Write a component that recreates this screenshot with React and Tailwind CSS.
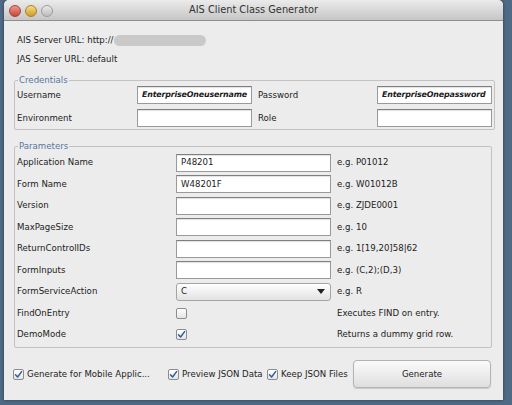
const font = "font-['Lucida_Grande','DejaVu_Sans',Verdana,sans-serif]";

const Field = ({ value, italic, className = "" }) => (
  <div
    className={`h-[18px] bg-white border border-[#9a9a9a] border-t-[#7f7f7f] shadow-[inset_0_1px_1px_rgba(0,0,0,0.12)] flex items-center px-[4px] whitespace-nowrap overflow-hidden text-[#1a1a1a] ${italic ? "italic font-bold text-[7.9px] tracking-[-0.15px]" : "text-[8.6px]"} ${className}`}
  >
    {value}
  </div>
);

const Check = ({ checked }) => (
  <div className="w-[11px] h-[11px] shrink-0 rounded-[2px] border border-[#8d8d8d] bg-gradient-to-b from-white to-[#e4e4e4] flex items-center justify-center">
    {checked && (
      <svg width="9" height="9" viewBox="0 0 9 9">
        <path d="M1.5 4.8 L3.6 7 L7.6 1.6" fill="none" stroke="#2f5f9f" strokeWidth="1.5" strokeLinecap="round" strokeLinejoin="round" />
      </svg>
    )}
  </div>
);

const params = [
  { label: "Application Name", value: "P48201", hint: "e.g. P01012" },
  { label: "Form Name", value: "W48201F", hint: "e.g. W01012B" },
  { label: "Version", value: "", hint: "e.g. ZJDE0001" },
  { label: "MaxPageSize", value: "", hint: "e.g. 10" },
  { label: "ReturnControlIDs", value: "", hint: "e.g. 1[19,20]58|62" },
  { label: "FormInputs", value: "", hint: "e.g. (C,2);(D,3)" },
  { label: "FormServiceAction", combo: "C", hint: "e.g. R" },
  { label: "FindOnEntry", check: false, hint: "Executes FIND on entry." },
  { label: "DemoMode", check: true, hint: "Returns a dummy grid row." },
];

export default function App() {
  return (
    <div className={`w-[512px] h-[405px] bg-[#4f6a85] pl-[4px] pr-[9px] pb-[5px] ${font} text-[8.6px] text-[#222] whitespace-nowrap`}>
      <div className="w-full h-full bg-[#ececec] rounded-t-[5px] flex flex-col overflow-hidden shadow-[0_0_3px_rgba(0,0,0,0.5)]">
        {/* title bar */}
        <div className="h-[21px] shrink-0 relative flex items-center justify-center bg-gradient-to-b from-[#ebebeb] to-[#c6c6c6] border-b border-[#8e8e8e]">
          <div className="absolute left-[5px] top-[5px] flex gap-[4px]">
            <div className="w-[12px] h-[12px] rounded-full bg-gradient-to-b from-[#f1958b] to-[#c6453c] border border-[#a0453e]" />
            <div className="w-[12px] h-[12px] rounded-full bg-gradient-to-b from-[#f6dc85] to-[#cf9c24] border border-[#a8802a]" />
            <div className="w-[12px] h-[12px] rounded-full bg-gradient-to-b from-[#e9e9e9] to-[#bdbdbd] border border-[#9c9c9c]" />
          </div>
          <span className="text-[9.8px] text-[#333]">AIS Client Class Generator</span>
        </div>

        {/* server info */}
        <div className="pl-[13px] pt-[13px] flex flex-col gap-[7px]">
          <div className="h-[12px] flex items-center">
            <span>AIS Server URL: http://</span>
            <div className="w-[92px] h-[11px] rounded-full bg-[#c9c9c9] blur-[0.5px]" />
          </div>
          <div className="h-[12px] flex items-center">JAS Server URL: default</div>
        </div>

        {/* credentials */}
        <fieldset className="mt-[9px] ml-[10px] w-[478px] border border-[#c2c2c2] rounded-[2px] px-[2px] pb-[2px]">
          <legend className="ml-[1px] px-[1px] text-[#5577a0] leading-[12px]">Credentials</legend>
          <div className="flex flex-col gap-[5px]">
            <div className="flex items-center h-[18px]">
              <span className="w-[120px]">Username</span>
              <Field value="EnterpriseOneusername" italic className="w-[115px]" />
              <span className="ml-[6px] w-[119px]">Password</span>
              <Field value="EnterpriseOnepassword" italic className="w-[115px]" />
            </div>
            <div className="flex items-center h-[18px]">
              <span className="w-[120px]">Environment</span>
              <Field value="" className="w-[115px]" />
              <span className="ml-[6px] w-[119px]">Role</span>
              <Field value="" className="w-[115px]" />
            </div>
          </div>
        </fieldset>

        {/* parameters */}
        <fieldset className="mt-[10px] ml-[10px] w-[478px] border border-[#c2c2c2] rounded-[2px] px-[2px] pb-[1px]">
          <legend className="ml-[1px] px-[1px] text-[#5577a0] leading-[12px]">Parameters</legend>
          <div className="flex flex-col">
            {params.map((p) => (
              <div key={p.label} className="h-[21.5px] flex items-center">
                <span className="w-[159px]">{p.label}</span>
                <div className="w-[155px]">
                  {p.combo ? (
                    <div className="h-[18px] rounded-[3px] border border-[#a4a4a4] bg-gradient-to-b from-white to-[#e2e2e2] flex items-center justify-between px-[4px]">
                      <span>{p.combo}</span>
                      <svg width="8" height="5" viewBox="0 0 8 5" className="mr-[1px]">
                        <path d="M0 0 H8 L4 5 Z" fill="#222" />
                      </svg>
                    </div>
                  ) : p.check !== undefined ? (
                    <Check checked={p.check} />
                  ) : (
                    <Field value={p.value} className="h-[17px]" />
                  )}
                </div>
                <span className="ml-[6px]">{p.hint}</span>
              </div>
            ))}
          </div>
        </fieldset>

        {/* bottom bar */}
        <div className="mt-[12px] pl-[9px] flex items-center h-[29px]">
          <Check checked />
          <span className="ml-[3px] w-[141px]">Generate for Mobile Applic...</span>
          <Check checked />
          <span className="ml-[3px] w-[85px]">Preview JSON Data</span>
          <Check checked />
          <span className="ml-[3px]">Keep JSON Files</span>
          <button className="shrink-0 ml-auto mr-[12px] w-[138px] h-[28px] rounded-[4px] border border-[#b3b3b3] bg-gradient-to-b from-[#fbfbfb] to-[#dedede] shadow-[0_1px_1px_rgba(0,0,0,0.15)] text-[8.6px] text-[#222] flex items-start justify-center pt-[7px]">
            Generate
          </button>
        </div>
      </div>
    </div>
  );
}
